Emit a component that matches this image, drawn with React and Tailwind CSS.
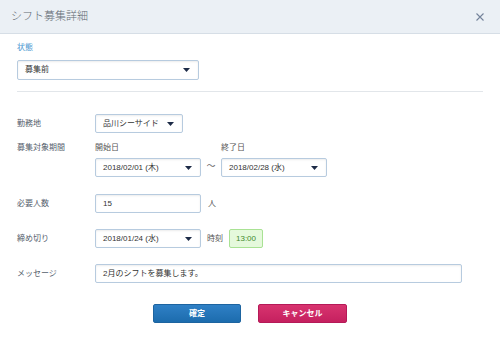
import React from "react";

const Arrow = () => (
  <svg width="7" height="4" viewBox="0 0 7 4" className="shrink-0">
    <path d="M0 0H7L3.5 4Z" fill="#1d2b47" />
  </svg>
);

const Select = ({ children, className = "" }) => (
  <div
    className={
      "flex h-[19px] items-center justify-between rounded-[2px] border border-[#b7cbdf] bg-white pl-[7px] pr-[8px] text-[8px] text-[#333] shadow-[inset_0_1px_2px_rgba(0,0,0,0.08)] " +
      className
    }
  >
    <span>{children}</span>
    <Arrow />
  </div>
);

const Input = ({ children, className = "" }) => (
  <div
    className={
      "flex h-[19px] items-center rounded-[2px] border border-[#b7cbdf] bg-white pl-[7px] text-[8px] text-[#333] shadow-[inset_0_1px_2px_rgba(0,0,0,0.08)] " +
      className
    }
  >
    {children}
  </div>
);

const Label = ({ children }) => (
  <div className="w-[78px] shrink-0 text-[8px] leading-[10px] text-[#55606c]">{children}</div>
);

export default function App() {
  return (
    <div className="h-[352px] w-[500px] overflow-hidden bg-white font-['Liberation_Sans','Noto_Sans_CJK_JP',sans-serif]">
      <div className="flex h-[34px] items-center justify-between border-b border-[#d6dee6] bg-[#ebf0f5] pl-[11px] pr-[16px]">
        <div className="text-[11px] font-light text-[#626a72]">シフト募集詳細</div>
        <svg width="8" height="8" viewBox="0 0 8 8">
          <path d="M0.5 0.5L7.5 7.5M7.5 0.5L0.5 7.5" stroke="#74839a" strokeWidth="1.1" />
        </svg>
      </div>
      <div className="px-[17px]">
        <div className="pt-[9px] text-[8px] leading-[10px] text-[#4b97d0]">状態</div>
        <Select className="mt-[7px] h-[20px] w-[182px]">募集前</Select>
        <div className="mt-[11px] border-t border-[#e2e6ea]" />

        <div className="mt-[22px] flex items-center">
          <Label>勤務地</Label>
          <Select className="w-[88px]">品川シーサイド</Select>
        </div>

        <div className="mt-[10px] flex">
          <Label>募集対象期間</Label>
          <div className="flex flex-col">
            <div className="text-[8px] leading-[10px] text-[#555]">開始日</div>
            <Select className="mt-[5px] w-[106px]">2018/02/01 (木)</Select>
          </div>
          <div className="flex w-[20px] items-end justify-center pb-[4px] text-[9px] text-[#666]">～</div>
          <div className="flex flex-col">
            <div className="text-[8px] leading-[10px] text-[#555]">終了日</div>
            <Select className="mt-[5px] w-[106px]">2018/02/28 (水)</Select>
          </div>
        </div>

        <div className="mt-[17px] flex items-center">
          <Label>必要人数</Label>
          <Input className="w-[106px]">15</Input>
          <div className="ml-[7px] text-[8px] text-[#555]">人</div>
        </div>

        <div className="mt-[16px] flex items-center">
          <Label>締め切り</Label>
          <Select className="w-[106px]">2018/01/24 (水)</Select>
          <div className="ml-[6px] text-[8px] text-[#555]">時刻</div>
          <div className="ml-[6px] flex h-[19px] w-[34px] items-center justify-center rounded-[2px] border border-[#a9e294] bg-[#e5f9dc] text-[8px] text-[#3f8a2c]">
            13:00
          </div>
        </div>

        <div className="mt-[16px] flex items-center">
          <Label>メッセージ</Label>
          <Input className="w-[367px]">2月のシフトを募集します。</Input>
        </div>

        <div className="mt-[21px] flex justify-center gap-[17px]">
          <div className="flex h-[19px] w-[88px] items-center justify-center rounded-[2px] border border-[#1d64a0] bg-gradient-to-b from-[#2f80c6] to-[#1c6cad] text-[8px] font-bold text-white">
            確定
          </div>
          <div className="flex h-[19px] w-[89px] items-center justify-center rounded-[2px] border border-[#b51a58] bg-gradient-to-b from-[#d8336f] to-[#c5205f] text-[8px] font-bold text-white">
            キャンセル
          </div>
        </div>
      </div>
    </div>
  );
}
